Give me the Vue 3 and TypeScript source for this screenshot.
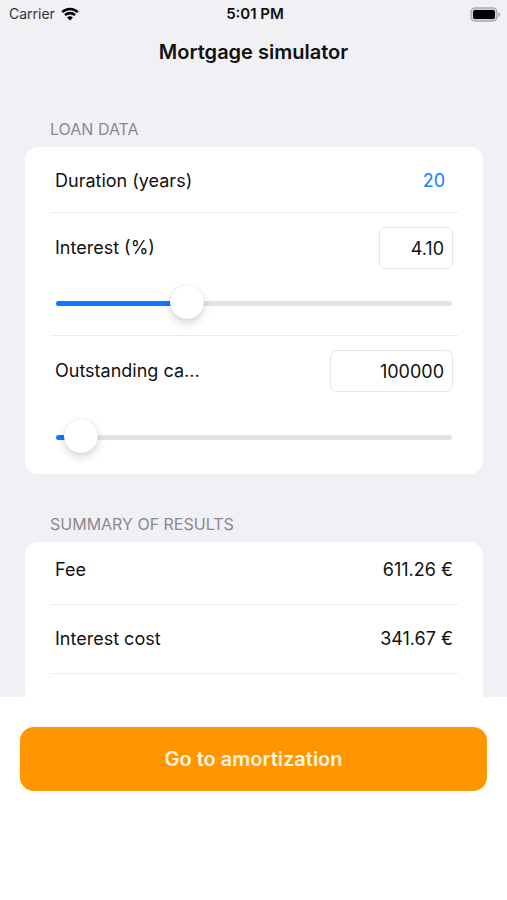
<script setup lang="ts">
import { computed, ref } from 'vue'

const THUMB = 34
const MAX_INTEREST = 13
const MAX_CAPITAL = 4500000

const years = ref<number>(20)
const interest = ref<string>('4.10')
const capital = ref<string>('100000')

const durations: number[] = [5, 10, 15, 20, 25, 30, 35, 40]

const fill = (value: number, max: number): string => {
  const ratio = Math.min(Math.max(value / max, 0), 1)
  return `calc(${THUMB / 2}px + (100% - ${THUMB}px) * ${ratio})`
}

const interestFill = computed(() => fill(Number(interest.value), MAX_INTEREST))
const capitalFill = computed(() => fill(Number(capital.value), MAX_CAPITAL))

const monthlyRate = computed(() => Number(interest.value) / 1200)
const fee = computed(() => {
  const rate = monthlyRate.value
  const months = years.value * 12
  const principal = Number(capital.value)
  return rate === 0 ? principal / months : (principal * rate) / (1 - Math.pow(1 + rate, -months))
})
const interestCost = computed(() => Number(capital.value) * monthlyRate.value)

const euros = (amount: number): string => `${amount.toFixed(2)} €`

const slideInterest = (event: Event): void => {
  interest.value = Number((event.target as HTMLInputElement).value).toFixed(2)
}
const slideCapital = (event: Event): void => {
  capital.value = (event.target as HTMLInputElement).value
}
</script>

<template>
  <div class="screen">
    <div class="status">
      <div class="carrier">
        <span>Carrier</span>
        <svg class="wifi" viewBox="0 0 18 14" aria-hidden="true">
          <path d="M1.2 5.1a11.2 11.2 0 0 1 15.6 0" />
          <path d="M4 8.1a7.2 7.2 0 0 1 10 0" />
          <path class="dot" d="M9 13.6 6.1 10.6a4.2 4.2 0 0 1 5.8 0z" />
        </svg>
      </div>
      <span class="clock">5:01 PM</span>
      <svg class="battery" viewBox="0 0 31 15" aria-hidden="true">
        <rect class="shell" x="1" y="1" width="26" height="13" rx="4" />
        <rect x="3" y="3" width="22" height="9" rx="2" />
        <path class="cap" d="M28.5 5.2c2.4.8 2.4 3.8 0 4.6z" />
      </svg>
    </div>

    <h1 class="title">Mortgage simulator</h1>

    <main class="content">
      <h2 class="heading">LOAN DATA</h2>
      <section class="card">
        <div class="row duration">
          <label for="years">Duration (years)</label>
          <select id="years" v-model="years" class="picker">
            <option v-for="n in durations" :key="n" :value="n">{{ n }}</option>
          </select>
        </div>

        <div class="group">
          <div class="row">
            <label id="interest-label" for="interest">Interest (%)</label>
            <input id="interest" v-model="interest" class="field small" type="text" inputmode="decimal" />
          </div>
          <input
            class="slider"
            type="range"
            min="0"
            :max="MAX_INTEREST"
            step="0.05"
            :value="interest"
            :style="{ '--fill': interestFill }"
            aria-labelledby="interest-label"
            @input="slideInterest"
          />
        </div>

        <div class="group tall">
          <div class="row">
            <label id="capital-label" for="capital">Outstanding ca...</label>
            <input id="capital" v-model="capital" class="field" type="text" inputmode="numeric" />
          </div>
          <input
            class="slider"
            type="range"
            min="0"
            :max="MAX_CAPITAL"
            step="1000"
            :value="capital"
            :style="{ '--fill': capitalFill }"
            aria-labelledby="capital-label"
            @input="slideCapital"
          />
        </div>
      </section>

      <h2 class="heading results">SUMMARY OF RESULTS</h2>
      <section class="card summary">
        <div class="row result first">
          <span>Fee</span>
          <span>{{ euros(fee) }}</span>
        </div>
        <div class="row result">
          <span>Interest cost</span>
          <span>{{ euros(interestCost) }}</span>
        </div>
      </section>
    </main>

    <footer class="footer">
      <button class="action" type="button">Go to amortization</button>
    </footer>
  </div>
</template>

<style>
body {
  margin: 0;
  background: #fff;
}
</style>

<style scoped>
.screen {
  display: flex;
  flex-direction: column;
  min-height: 100vh;
  background: #f0f0f5;
  color: #111;
  font-family: Inter, "Liberation Sans", sans-serif;
  font-size: 18px;
  line-height: 24px;
}

.screen * {
  box-sizing: border-box;
}

.status {
  display: grid;
  grid-template-columns: 1fr auto 1fr;
  align-items: center;
  height: 28px;
  padding: 0 6px 0 9px;
  font-size: 14px;
  line-height: 20px;
}

.carrier {
  display: flex;
  align-items: center;
  gap: 6px;
  color: #333;
}

.wifi {
  width: 18px;
  height: 14px;
  fill: none;
  stroke: #000;
  stroke-width: 2.6;
}

.wifi .dot {
  fill: #000;
  stroke: none;
}

.clock {
  font-size: 15px;
  font-weight: 600;
}

.battery {
  justify-self: end;
  width: 31px;
  height: 15px;
}

.battery .shell {
  fill: #d4d4d8;
  stroke: #aaaaae;
  stroke-width: 1.4;
}

.battery .cap {
  fill: #aaaaae;
}

.title {
  margin: 0;
  padding-top: 12px;
  text-align: center;
  font-size: 20px;
  font-weight: 600;
  line-height: 24px;
}

.content {
  display: flex;
  flex: 1;
  flex-direction: column;
  padding: 55px 24px 0 25px;
}

.heading {
  margin: 0;
  padding: 0 25px 8px;
  color: #8a8a8e;
  font-size: 16px;
  font-weight: 400;
  line-height: 20px;
}

.results {
  padding-top: 40px;
}

.card {
  padding: 0 25px;
  border-radius: 13px;
  background: #fff;
}

.row {
  display: flex;
  align-items: center;
  justify-content: space-between;
  padding: 0 5px;
}

.duration {
  height: 65px;
  padding-top: 2px;
}

.picker {
  width: 60px;
  margin-right: 8px;
  padding: 0;
  border: 0;
  appearance: none;
  background: transparent;
  color: #0f7fff;
  font: inherit;
  text-align: right;
  text-align-last: right;
}

.group {
  height: 123px;
  padding-top: 14px;
  border-top: 1px solid #ececee;
}

.group.tall {
  height: 139px;
}

.field {
  width: 123px;
  height: 42px;
  padding: 0 8px;
  border: 1px solid #e8e8ea;
  border-radius: 7px;
  background: #fff;
  color: inherit;
  font: inherit;
  text-align: right;
}

.field.small {
  width: 74px;
}

.slider {
  display: block;
  width: calc(100% - 12px);
  height: 34px;
  margin: 17px 6px 0;
  appearance: none;
  background: transparent;
}

.tall .slider {
  margin-top: 28px;
}

.slider::-webkit-slider-runnable-track {
  height: 5px;
  border-radius: 3px;
  background: linear-gradient(to right, #0a7aff var(--fill), #e3e3e4 var(--fill));
}

.slider::-webkit-slider-thumb {
  width: 34px;
  height: 34px;
  margin-top: -16px;
  border: 0;
  border-radius: 50%;
  appearance: none;
  background: #fff;
  box-shadow: 0 0 1px rgba(0, 0, 0, 0.2), 0 4px 9px rgba(0, 0, 0, 0.16);
}

.summary {
  flex: 1;
  border-radius: 13px 13px 0 0;
}

.result {
  height: 69px;
  border-bottom: 1px solid #ececee;
}

.result.first {
  height: 63px;
  padding-bottom: 6px;
}

.footer {
  padding: 30px 20px 109px;
  background: #fff;
}

.action {
  display: block;
  width: 100%;
  height: 64px;
  border: 0;
  border-radius: 14px;
  background: #ff9500;
  color: #fff5dc;
  font: inherit;
  font-size: 20px;
  font-weight: 600;
}
</style>
